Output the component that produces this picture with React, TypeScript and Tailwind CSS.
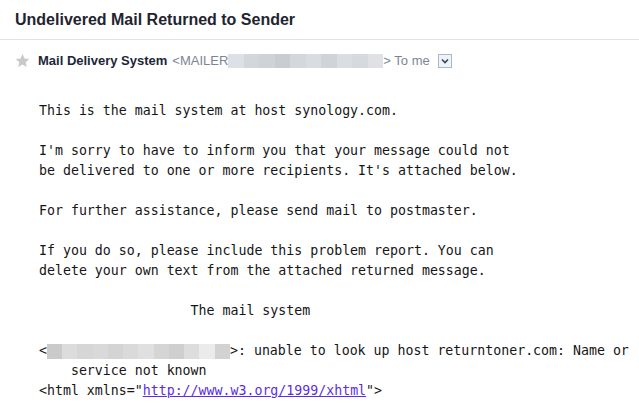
import React from "react";

const headerBlur = ["#dde0e4", "#d3d6db", "#cfd2d7", "#c9cdd1", "#d4d7db", "#d9dce0", "#d0d3d7", "#dadde1", "#d6d9dd", "#dfe1e4"];
const bodyBlur = ["#cacaca", "#dcdcdc", "#d6d6d6", "#d9d9d9", "#d4d4d4", "#dadada", "#e0e0e2", "#d5d5d5", "#cfcfcf", "#dddddd", "#ebebeb", "#d2d2d2"];

function Blur({ colors, w, h }: { colors: string[]; w: number; h: number }) {
  return (
    <span className="inline-flex align-middle" style={{ width: w, height: h }}>
      {colors.map((c, i) => (
        <span key={i} className="flex-1 h-full" style={{ background: c }} />
      ))}
    </span>
  );
}

export default function App() {
  return (
    <div className="w-[639px] h-[403px] bg-white overflow-hidden" style={{ fontFamily: '"Liberation Sans", Arial, sans-serif' }}>
      <div className="h-[40px] flex items-center px-[15px] border-b border-[#e2e2e2]">
        <h1 className="text-[16px] font-bold text-[#1f2430]">Undelivered Mail Returned to Sender</h1>
      </div>

      <div className="h-[41px] flex items-center pl-[15px] text-[13px]">
        <svg width="15" height="15" viewBox="0 0 24 24" className="mr-[8px]">
          <path d="M12 1.5l3.2 7.2 7.8.7-5.9 5.2 1.8 7.7L12 18.2 5.1 22.3l1.8-7.7L1 9.4l7.8-.7z" fill="#c9c9c9" />
        </svg>
        <span className="font-bold text-[#1c2638]">Mail Delivery System</span>
        <span className="ml-[5px] text-[#7d8594]">&lt;MAILER</span>
        <Blur colors={headerBlur} w={155} h={14} />
        <span className="text-[#7d8594]">&gt; To me</span>
        <span className="ml-[8px] w-[14px] h-[14px] border border-[#aab8cc] bg-[#eef3f9] flex items-center justify-center">
          <svg width="8" height="6" viewBox="0 0 8 6">
            <path d="M1 1.5l3 3 3-3" stroke="#3a4658" strokeWidth="1.6" fill="none" />
          </svg>
        </span>
      </div>

      <pre
        className="pt-[20px] pl-[39px] text-[13.25px] leading-[20px] text-[#151515] whitespace-pre"
        style={{ fontFamily: '"DejaVu Sans Mono", "Liberation Mono", monospace' }}
      >
        {"This is the mail system at host synology.com.\n\n"}
        {"I'm sorry to have to inform you that your message could not\n"}
        {"be delivered to one or more recipients. It's attached below.\n\n"}
        {"For further assistance, please send mail to postmaster.\n\n"}
        {"If you do so, please include this problem report. You can\n"}
        {"delete your own text from the attached returned message.\n\n"}
        {"                   The mail system\n\n"}
        {"<"}
        <Blur colors={bodyBlur} w={183} h={15} />
        {">: unable to look up host returntoner.com: Name or\n"}
        {"    service not known\n"}
        {'<html xmlns="'}
        <a href="#" className="underline text-[#5b2de6]">http://www.w3.org/1999/xhtml</a>
        {'">'}
      </pre>
    </div>
  );
}
